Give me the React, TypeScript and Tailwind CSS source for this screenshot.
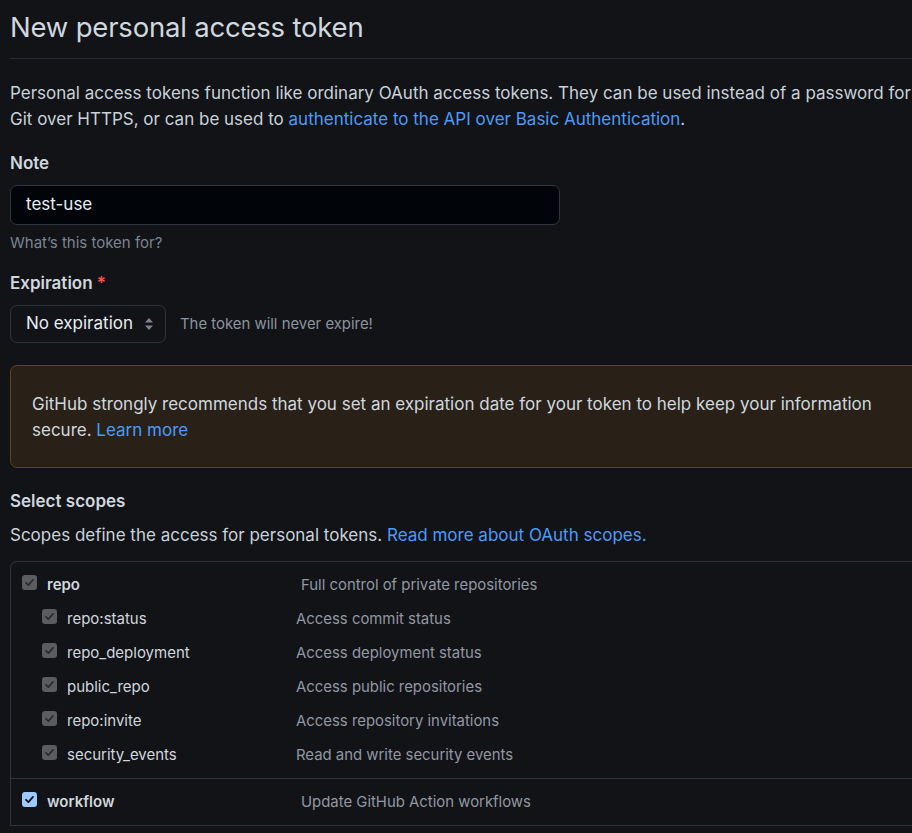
import React from "react";

type Scope = { name: string; desc: string; checked: "disabled" | "on"; children?: { name: string; desc: string }[] };

const SCOPES: Scope[] = [
  {
    name: "repo",
    desc: "Full control of private repositories",
    checked: "disabled",
    children: [
      { name: "repo:status", desc: "Access commit status" },
      { name: "repo_deployment", desc: "Access deployment status" },
      { name: "public_repo", desc: "Access public repositories" },
      { name: "repo:invite", desc: "Access repository invitations" },
      { name: "security_events", desc: "Read and write security events" },
    ],
  },
  { name: "workflow", desc: "Update GitHub Action workflows", checked: "on" },
];

function Check({ variant }: { variant: "disabled" | "on" }) {
  const box = variant === "on" ? "bg-[#9ccbff]" : "bg-[#5b5c5e]";
  const stroke = variant === "on" ? "#0d1117" : "#2a2b2d";
  return (
    <span className={"w-[15px] h-[15px] rounded-[3px] flex items-center justify-center shrink-0 " + box}>
      <svg width="11" height="11" viewBox="0 0 12 12" fill="none">
        <path d="M2.2 6.3 L4.8 8.9 L9.8 3.2" stroke={stroke} strokeWidth="1.9" strokeLinecap="round" strokeLinejoin="round" />
      </svg>
    </span>
  );
}

export default function App() {
  return (
    <div className="w-[912px] h-[833px] overflow-hidden bg-[#111317] text-[#c9d1d9] font-['Inter','Liberation_Sans',sans-serif]">
      <div className="w-[925px] pl-[10px]">
        {/* Header */}
        <div className="h-[59px] border-b border-[#262a30] flex items-start pt-[8px]">
          <h1 className="text-[27.5px] leading-[38px] font-normal text-[#d0d7de] tracking-[-0.2px]">New personal access token</h1>
        </div>

        <p className="mt-[21px] text-[17px] leading-[26px] whitespace-nowrap">
          Personal access tokens function like ordinary OAuth access tokens. They can be used instead of a password for
          <br />
          Git over HTTPS, or can be used to{" "}
          <a className="text-[#4c9bf8]">authenticate to the API over Basic Authentication</a>.
        </p>

        {/* Note */}
        <div className="mt-[20px]">
          <div className="text-[17px] leading-[22px] font-semibold text-[#d0d7de]">Note</div>
          <div className="mt-[11px] w-[550px] h-[40px] rounded-[7px] border border-[#30363d] bg-[#010409] flex items-center px-[15px] text-[17px] text-[#e6edf3]">
            test-use
          </div>
          <div className="mt-[9px] text-[15px] leading-[18px] text-[#7d8590]">What’s this token for?</div>
        </div>

        {/* Expiration */}
        <div className="mt-[20px]">
          <div className="text-[17px] leading-[22px] font-semibold text-[#d0d7de]">
            Expiration <span className="text-[#f85149]">*</span>
          </div>
          <div className="mt-[11px] flex items-center gap-[14px]">
            <div className="w-[156px] h-[38px] rounded-[7px] border border-[#30363d] flex items-center justify-between pl-[15px] pr-[11px] text-[17px] text-[#e6edf3]">
              <span>No expiration</span>
              <svg width="10" height="14" viewBox="0 0 10 14">
                <path d="M5 1 L9 5.5 H1 Z" fill="#7d8590" />
                <path d="M5 13 L9 8.5 H1 Z" fill="#7d8590" />
              </svg>
            </div>
            <span className="text-[14.9px] text-[#8b949e]">The token will never expire!</span>
          </div>
        </div>

        {/* Warning */}
        <div className="mt-[22px] h-[103px] rounded-[7px] border border-[#5e4516] bg-[#292118] px-[21px] flex items-center">
          <p className="text-[17px] leading-[26px] whitespace-nowrap text-[#d0d7de]">
            GitHub strongly recommends that you set an expiration date for your token to help keep your information
            <br />
            secure. <a className="text-[#4c9bf8]">Learn more</a>
          </p>
        </div>

        {/* Scopes */}
        <div className="mt-[22px]">
          <div className="text-[17px] leading-[22px] font-semibold text-[#d0d7de]">Select scopes</div>
          <p className="mt-[12px] text-[17px] leading-[22px] whitespace-nowrap">
            Scopes define the access for personal tokens.{" "}
            <a className="text-[#4c9bf8]">Read more about OAuth scopes.</a>
          </p>

          <div className="mt-[15px] rounded-t-[7px] border border-[#30363d] border-b-0">
            {SCOPES.map(s => (
              <div key={s.name} className="py-[6px] border-b border-[#30363d]">
                <div className="h-[34px] flex items-center">
                  <div className="w-[290px] flex items-center pl-[11px]">
                    <span className="-mt-[5px]"><Check variant={s.checked} /></span>
                    <span className="ml-[10px] text-[15px] font-semibold text-[#d0d7de]">{s.name}</span>
                  </div>
                  <span className="text-[14.9px] text-[#9198a1]">{s.desc}</span>
                </div>
                {s.children?.map(c => (
                  <div key={c.name} className="h-[34px] flex items-center">
                    <div className="w-[285px] flex items-center pl-[31px]">
                      <span className="-mt-[5px]"><Check variant="disabled" /></span>
                      <span className="ml-[10px] text-[15px] text-[#d0d7de]">{c.name}</span>
                    </div>
                    <span className="text-[14.9px] text-[#9198a1]">{c.desc}</span>
                  </div>
                ))}
              </div>
            ))}
          </div>
        </div>
      </div>
    </div>
  );
}
